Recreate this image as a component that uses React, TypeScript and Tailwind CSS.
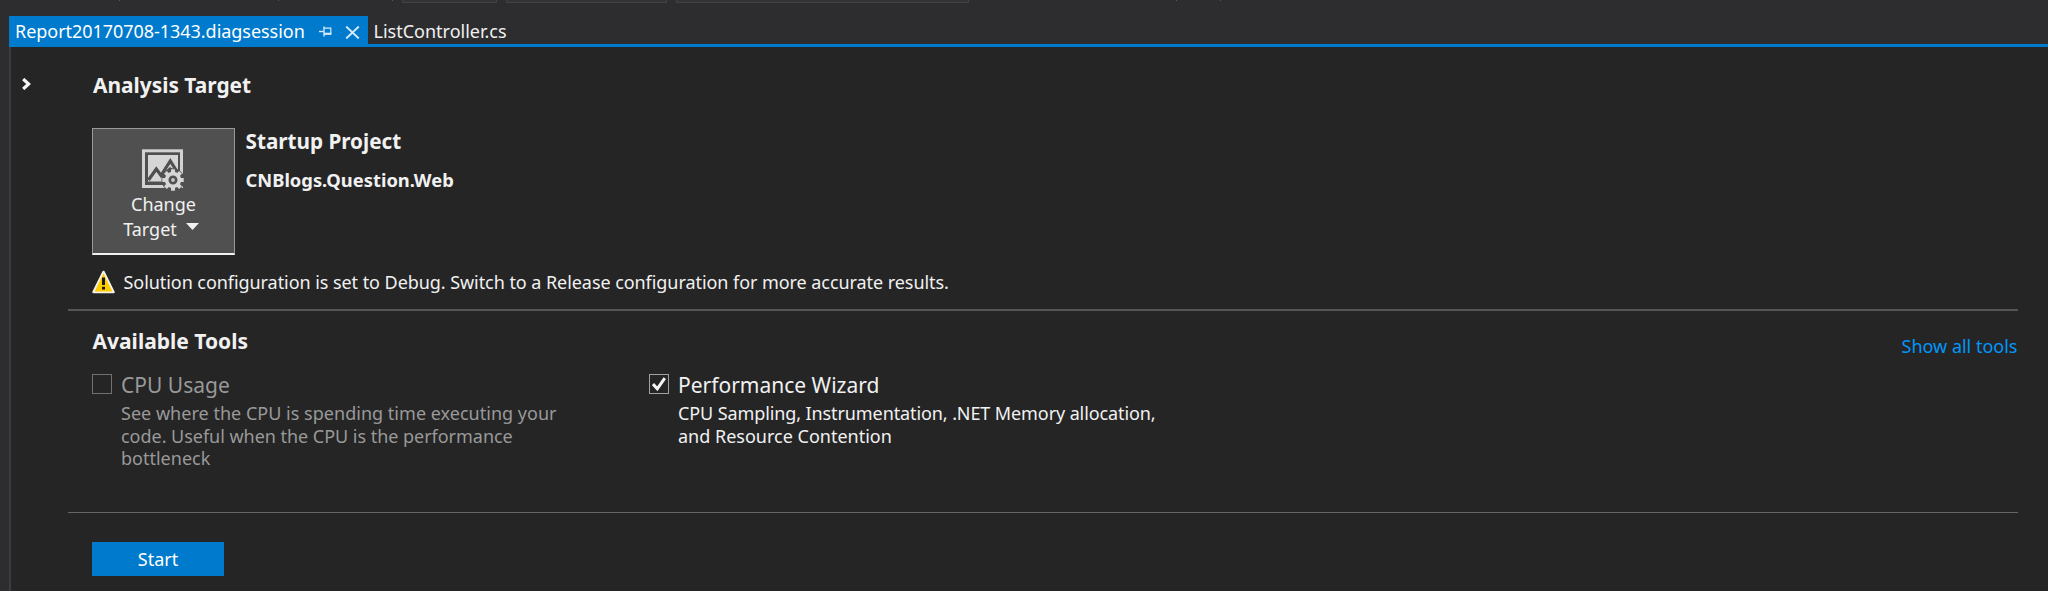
import type { ReactNode } from "react";

function PinIcon() {
  return (
    <svg className="h-[11px] w-[13px]" viewBox="0 0 13 11" fill="none" stroke="#d5eafa" aria-hidden="true">
      <path d="M0 5.5H4.5" strokeWidth="1.4" />
      <path d="M5 .5V10.5" strokeWidth="1.4" />
      <path d="M5 2.2H11.8V8" strokeWidth="1.2" />
      <path d="M5 7.8H12.4" strokeWidth="2.2" />
    </svg>
  );
}

function CloseIcon() {
  return (
    <svg className="h-[13px] w-[15px]" viewBox="0 0 15 13" fill="none" stroke="#d5eafa" strokeWidth="2" aria-hidden="true">
      <path d="M1.2 .6L13.8 12.4M13.8 .6L1.2 12.4" />
    </svg>
  );
}

function ChevronIcon() {
  return (
    <svg className="h-3 w-[9px]" viewBox="0 0 9 12" fill="none" stroke="#f5f5f5" strokeWidth="3.2" aria-hidden="true">
      <path d="M1.2 1L6.6 6L1.2 11" />
    </svg>
  );
}

const teeth = [0, 45, 90, 135, 180, 225, 270, 315];

function TargetIcon() {
  return (
    <svg className="-ml-[2px] h-[42px] w-[42px]" viewBox="0 0 42 42" aria-hidden="true">
      <rect x="1.5" y="1.8" width="38" height="35.7" fill="none" stroke="#d2d2d2" strokeWidth="3" />
      <rect x="6" y="6" width="30" height="26.5" fill="#d6d6d6" />
      <path d="M6.5 31L14.3 20L19 26.5L28.3 12L36.5 25" fill="none" stroke="#505053" strokeWidth="3.2" />
      <path d="M24.5 22L28 19L31 21" fill="none" stroke="#505053" strokeWidth="1.6" />
      <circle cx="31" cy="31" r="11.5" fill="#505050" />
      <g fill="#d6d6d6">
        {teeth.map((a) => (
          <rect key={a} x="29" y="20.3" width="4" height="6" transform={`rotate(${a} 31 31)`} />
        ))}
        <circle cx="31" cy="31" r="8.2" />
      </g>
      <circle cx="31" cy="31" r="3.2" fill="#c4c4c4" stroke="#505053" strokeWidth="2.6" />
    </svg>
  );
}

function WarningIcon() {
  return (
    <svg className="h-6 w-[23px]" viewBox="0 0 23 24" aria-hidden="true">
      <path d="M11.5 2L21.4 22H1.6Z" fill="#fc0" stroke="#f4f1e6" strokeWidth="2.6" strokeLinejoin="round" />
      <path d="M11.5 3.6L20.3 21.4H2.7Z" fill="#fc0" />
      <path d="M10 7.5H13V15H10ZM10 16.8H13V19.4H10Z" fill="#1a1a1a" />
    </svg>
  );
}

function Checkbox({ checked = false }: { checked?: boolean }) {
  return (
    <span
      className={
        checked
          ? "flex h-5 w-5 items-center justify-center border border-[#a0a0a0]"
          : "flex h-5 w-5 items-center justify-center border border-[#707070]"
      }
    >
      {checked && (
        <svg className="h-[14px] w-[14px]" viewBox="0 0 14 14" fill="none" stroke="#f5f5f5" strokeWidth="3" aria-hidden="true">
          <path d="M1 7L5.3 11.8L12.8 1.2" />
        </svg>
      )}
    </span>
  );
}

function Tool({ title, checked, className, children }: { title: string; checked?: boolean; className: string; children: ReactNode }) {
  return (
    <div className={className}>
      <div className="flex h-7 items-start">
        <div className="pt-[3px]">
          <Checkbox checked={checked} />
        </div>
        <h3 className="ml-[9px] text-[21px] leading-7">{title}</h3>
      </div>
      <p className="mt-[3px] ml-[29px] text-lg leading-[22.67px] whitespace-nowrap">{children}</p>
    </div>
  );
}

function ToolbarEdge() {
  return (
    <div className="flex h-4 items-start">
      <span className="ml-[119px] h-px w-px bg-[#55555a]" />
      <span className="ml-[158px] h-px w-px bg-[#55555a]" />
      <span className="ml-[113px] h-px w-px bg-[#55555a]" />
      <span className="ml-[9px] h-[3px] w-[95px] border-x border-b border-[#434346] bg-[#333337]" />
      <span className="ml-[9px] h-[3px] w-[161px] border-x border-b border-[#434346] bg-[#333337]" />
      <span className="ml-[9px] h-[3px] w-[293px] border-x border-b border-[#434346] bg-[#333337]" />
      <span className="ml-[207px] h-px w-px bg-[#55555a]" />
      <span className="ml-[43px] h-px w-px bg-[#55555a]" />
    </div>
  );
}

export default function App() {
  return (
    <div className="flex h-[591px] w-[2048px] flex-col overflow-hidden bg-[#2d2d30] font-['Noto_Sans',sans-serif] text-lg text-[#f1f1f1]">
      <ToolbarEdge />
      <div className="ml-[9px] flex h-[31px] shrink-0 border-b-[3px] border-[#007acc]">
        <div className="flex h-7 w-[359px] items-start bg-[#007acc] text-white">
          <span className="ml-[6px] leading-[31px] tracking-[-0.04px]">Report20170708-1343.diagsession</span>
          <span className="mt-[10px] ml-auto">
            <PinIcon />
          </span>
          <span className="mt-[10px] mr-[8px] ml-[13px]">
            <CloseIcon />
          </span>
        </div>
        <span className="ml-[5.5px] leading-[31px]">ListController.cs</span>
      </div>

      <main className="ml-[9px] flex min-h-0 flex-1 border-l-2 border-[#3c3c40] bg-[#252526]">
        <div className="w-[57px] shrink-0 pt-[31px] pl-[11px]">
          <ChevronIcon />
        </div>
        <div className="w-[1949.5px]">
          <section className="h-[264px] border-b-2 border-[#555557] pt-6 pl-6">
            <h2 className="ml-px text-[20.9px] leading-7 font-bold">Analysis Target</h2>
            <div className="mt-[29px] flex">
              <button className="flex h-[127px] w-[143px] flex-col items-center border border-b-2 border-[#999999] border-b-[#f1f1f1] bg-[#505050] pt-5 leading-[25px]">
                <TargetIcon />
                <span className="mt-px">Change</span>
                <span className="mr-[5px] flex">
                  Target
                  <svg className="mt-[6px] ml-[9px] h-[7px] w-[13px]" viewBox="0 0 13 7" aria-hidden="true">
                    <path d="M0 0H13L6.5 7Z" fill="#f1f1f1" />
                  </svg>
                </span>
              </button>
              <div className="-mt-px ml-[10.5px]">
                <h2 className="text-[20.7px] leading-7 font-bold">Startup Project</h2>
                <p className="mt-[13px] text-[18.35px] leading-6 font-bold">CNBlogs.Question.Web</p>
              </div>
            </div>
            <div className="mt-[15px] flex h-6">
              <WarningIcon />
              <span className="ml-[8.5px] leading-6 tracking-[-0.06px]">
                Solution configuration is set to Debug. Switch to a Release configuration for more accurate results.
              </span>
            </div>
          </section>

          <section className="h-[202px] border-b border-[#666668] pt-4 pl-6">
            <div className="flex h-11 justify-between">
              <h2 className="ml-[0.5px] text-[21px] leading-7 font-bold">Available Tools</h2>
              <a className="mt-[7px] h-6 leading-6 text-[#0097fb]">Show all tools</a>
            </div>
            <div className="flex">
              <Tool className="w-[557px] text-[#999999]" title="CPU Usage">
                <span className="tracking-[0.02px]">See where the CPU is spending time executing your</span>
                <br />
                <span className="tracking-[-0.03px]">code. Useful when the CPU is the performance</span>
                <br />
                bottleneck
              </Tool>
              <Tool className="text-[#f1f1f1]" title="Performance Wizard" checked>
                <span className="tracking-[-0.1px]">CPU Sampling, Instrumentation, .NET Memory allocation,</span>
                <br />
                and Resource Contention
              </Tool>
            </div>
          </section>

          <button className="mt-[29px] ml-6 h-[34px] w-[132px] bg-[#007acc] leading-[33px] text-white">Start</button>
        </div>
      </main>
    </div>
  );
}
